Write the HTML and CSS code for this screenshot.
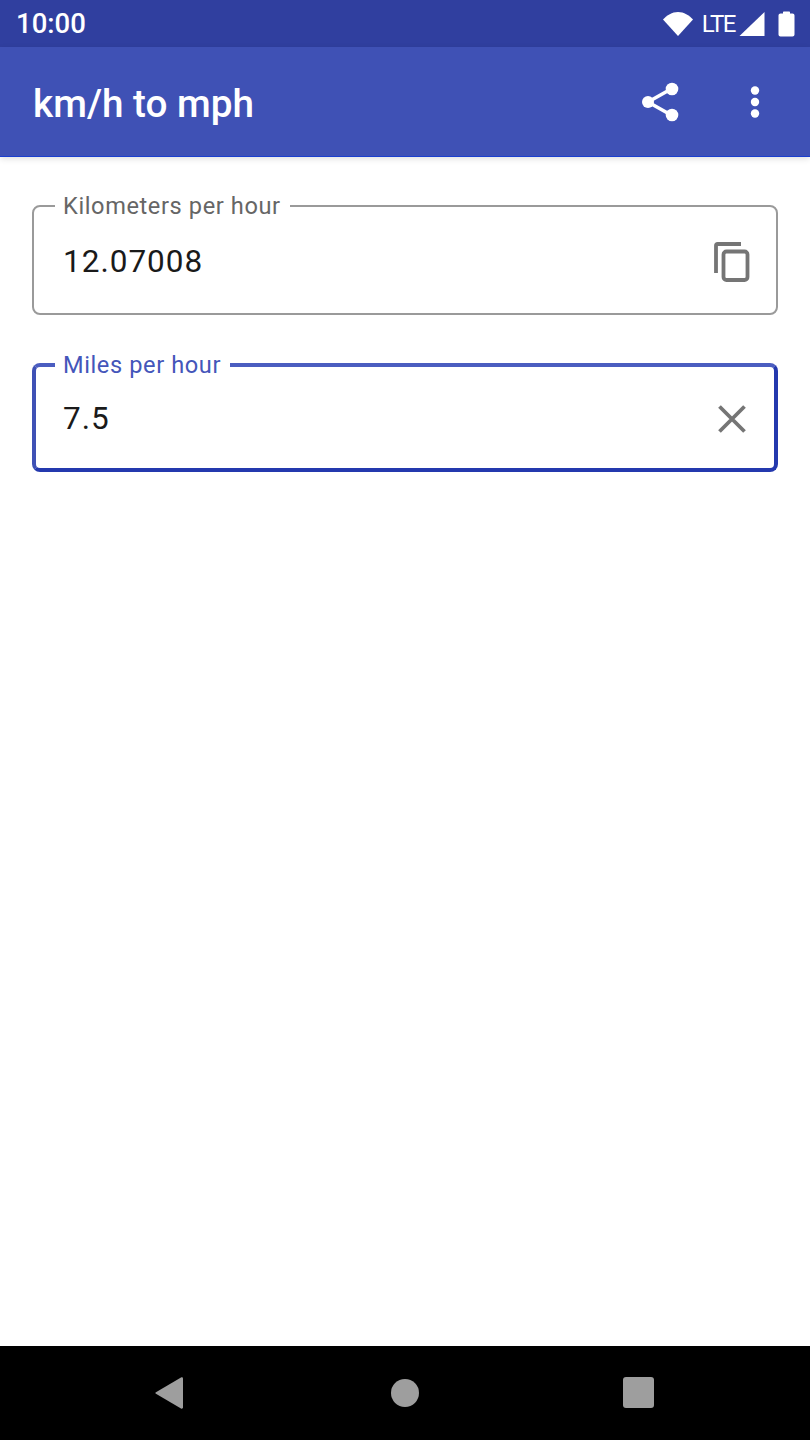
FILE: index.html
```html
<!DOCTYPE html>
<html lang="en">
<head>
    <meta charset="UTF-8">
    <meta name="viewport" content="width=device-width, initial-scale=1.0">
    <title>km/h to mph</title>
    <link rel="stylesheet" href="styles.css">
</head>
<body>

    <div class="status-bar">
        <span class="clock">10:00</span>
        <div class="status-icons">
            <svg class="wifi" width="30" height="24" viewBox="0 0 30 24"><path d="M0 7.500C4 3.300 9 0 15 0S26 3.300 30 7.500L15 24Z" fill="#fff"/></svg>
            <span class="lte">LTE</span>
            <svg class="signal" width="26" height="24" viewBox="0 0 26 24"><path d="M25.500 0V24H0.500Z" fill="#fff"/></svg>
            <svg class="battery" width="17" height="26" viewBox="0 0 17 26"><path d="M5 2.500V1.500C5 .9 5.400 .5 6 .5H11C11.600 .5 12 .9 12 1.500V2.500H14.500C15.600 2.500 16.500 3.400 16.500 4.500V23.500C16.500 24.600 15.600 25.500 14.500 25.500H2.500C1.400 25.500 .5 24.600 .5 23.500V4.500C.5 3.400 1.400 2.500 2.500 2.500Z" fill="#fff"/></svg>
        </div>
    </div>

    <header class="toolbar">
        <h1 class="title">km/h to mph</h1>
        <div class="actions">
            <svg class="share" width="40" height="42" viewBox="0 0 40 42">
                <path d="M7 21L31 7.500M7 21L31 34.500" stroke="#fff" stroke-width="3.600" fill="none"/>
                <circle cx="7" cy="21" r="6" fill="#fff"/>
                <circle cx="31" cy="8" r="6.300" fill="#fff"/>
                <circle cx="31" cy="34" r="6.300" fill="#fff"/>
            </svg>
            <svg class="more" width="10" height="32" viewBox="0 0 10 32">
                <circle cx="5" cy="4.500" r="4.200" fill="#fff"/>
                <circle cx="5" cy="16" r="4.200" fill="#fff"/>
                <circle cx="5" cy="27.500" r="4.200" fill="#fff"/>
            </svg>
        </div>
    </header>

    <main class="content">
        <fieldset class="field">
            <legend>Kilometers per hour</legend>
            <div class="field-row">
                <span class="value">12.07008</span>
                <svg class="field-icon" width="36" height="40" viewBox="0 0 36 40">
                    <path d="M2 31V3.500C2 2.500 2.500 2 3.500 2H27" stroke="#757575" stroke-width="3.800" fill="none"/>
                    <rect x="9.500" y="9.500" width="24" height="28.500" rx="3" stroke="#757575" stroke-width="3.800" fill="none"/>
                </svg>
            </div>
        </fieldset>

        <fieldset class="field focused">
            <legend>Miles per hour</legend>
            <div class="field-row">
                <span class="value">7.5</span>
                <svg class="field-icon" width="36" height="40" viewBox="0 0 36 40">
                    <path d="M5.500 7.500L30.500 32.500M30.500 7.500L5.500 32.500" stroke="#757575" stroke-width="3.800" fill="none"/>
                </svg>
            </div>
        </fieldset>
    </main>

    <nav class="nav-bar">
        <svg width="34" height="34" viewBox="0 0 34 34"><path d="M2.500 16.500L28 1.500C29 1 30 1.500 30 2.500V31.500C30 32.500 29 33 28 32.500L2.500 17.500Z" fill="#9e9e9e"/></svg>
        <svg width="30" height="30" viewBox="0 0 30 30"><circle cx="15" cy="15" r="14" fill="#9e9e9e"/></svg>
        <svg width="32" height="32" viewBox="0 0 32 32"><rect x="0" y="0" width="31" height="31" rx="3" fill="#9e9e9e"/></svg>
    </nav>

</body>
</html>
```

FILE: styles.css
```css
* {
    margin: 0;
    padding: 0;
    box-sizing: border-box;
}

body {
    font-family: 'Roboto', sans-serif;
    background-color: #fff;
    display: flex;
    flex-direction: column;
    height: 1440px;
    overflow: hidden;
}

.status-bar {
    height: 47px;
    background-color: #303f9f;
    color: #fff;
    display: flex;
    align-items: center;
    justify-content: space-between;
    padding: 0 15px 0 16px;
}

.clock {
    font-size: 27.5px;
    font-weight: 500;
}

.status-icons {
    display: flex;
    align-items: center;
}

.lte {
    font-size: 24px;
    letter-spacing: -1.500px;
    margin: 0 4px 0 9px;
}

.signal {
    margin-right: 13px;
}

.toolbar {
    height: 110px;
    background-color: #3f51b5;
    border-bottom: 1px solid #1a3fd0;
    box-shadow: 0 2px 6px rgba(0, 0, 0, 0.12);
    color: #fff;
    display: flex;
    align-items: center;
    justify-content: space-between;
    padding: 0 50px 0 33px;
}

.title {
    font-size: 38.700px;
    font-weight: 500;
    padding-top: 3px;
}

.actions {
    display: flex;
    align-items: center;
    gap: 69px;
}

.content {
    flex: 1;
    padding: 35px 32px 0;
    display: flex;
    flex-direction: column;
    gap: 36px;
}

.field {
    border: 2px solid #9a9a9a;
    border-radius: 8px;
    padding: 0 26px 10px 21px;
}

.field legend {
    padding: 0 9px 0 8px;
    font-size: 23.600px;
    letter-spacing: 0.600px;
    color: #666;
}

.field-row {
    height: 83px;
    padding-left: 8px;
    display: flex;
    align-items: center;
    justify-content: space-between;
}

.value {
    font-size: 31.500px;
    letter-spacing: 1px;
    color: #1a1a1a;
}

.focused {
    border: 4px solid #3f51b5;
    border-color: #4b5dc0 #2439ae #2439ae #3f51b5;
    padding-left: 19px;
    padding-right: 24px;
}

.focused legend {
    color: #4456ba;
}

.focused .field-row {
    height: 79px;
}

.nav-bar {
    height: 94px;
    background-color: #000;
    display: flex;
    align-items: center;
    justify-content: space-between;
    padding: 0 155px 0 153px;
}
```
